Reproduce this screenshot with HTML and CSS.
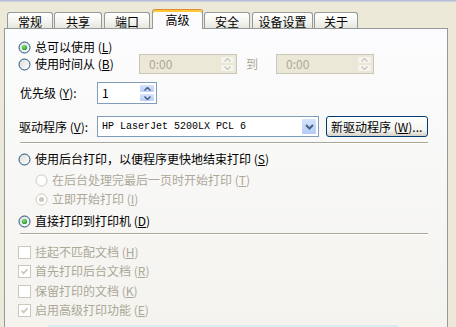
FILE: index.html
```html
<!DOCTYPE html>
<html>
<head>
<meta charset="utf-8">
<link rel="stylesheet" href="styles.css">
</head>
<body>
<div class="window">
  <div class="topline"></div>
  <div class="tabs">
    <div class="tab t1">常规</div>
    <div class="tab t2">共享</div>
    <div class="tab t3">端口</div>
    <div class="tab active">高级</div>
    <div class="tab t5">安全</div>
    <div class="tab t6">设备设置</div>
    <div class="tab t7">关于</div>
  </div>
  <div class="panel">
    <div class="row r1">
      <svg class="radio" width="13" height="13" viewBox="0 0 13 13"><defs><linearGradient id="rg" x1="0" y1="0" x2="1" y2="1"><stop offset="0" stop-color="#DCDCD7"/><stop offset="1" stop-color="#FFFFFF"/></linearGradient><radialGradient id="gd" cx="0.4" cy="0.35" r="0.7"><stop offset="0" stop-color="#7BE27B"/><stop offset="1" stop-color="#1E9A1E"/></radialGradient></defs><circle cx="6.5" cy="6.5" r="5.5" fill="url(#rg)" stroke="#1C5180"/><circle cx="6.5" cy="6.5" r="2.6" fill="url(#gd)"/></svg>
      <span class="label">总可以使用 (<u>L</u>)</span>
    </div>
    <div class="row r2">
      <svg class="radio" width="13" height="13" viewBox="0 0 13 13"><circle cx="6.5" cy="6.5" r="5.5" fill="url(#rg)" stroke="#1C5180"/></svg>
      <span class="label time-label">使用时间从 (<u>B</u>)</span>
      <div class="spin time disabled">
        <span class="val">0:00</span>
        <span class="btns"><span class="sb"><svg width="7" height="4" viewBox="0 0 7 4"><path d="M0.5 3.5 L3.5 0.5 L6.5 3.5" fill="none" stroke="#C9C7BA" stroke-width="1.3"/></svg></span><span class="sb"><svg width="7" height="4" viewBox="0 0 7 4"><path d="M0.5 0.5 L3.5 3.5 L6.5 0.5" fill="none" stroke="#C9C7BA" stroke-width="1.3"/></svg></span></span>
      </div>
      <span class="to">到</span>
      <div class="spin time disabled">
        <span class="val">0:00</span>
        <span class="btns"><span class="sb"><svg width="7" height="4" viewBox="0 0 7 4"><path d="M0.5 3.5 L3.5 0.5 L6.5 3.5" fill="none" stroke="#C9C7BA" stroke-width="1.3"/></svg></span><span class="sb"><svg width="7" height="4" viewBox="0 0 7 4"><path d="M0.5 0.5 L3.5 3.5 L6.5 0.5" fill="none" stroke="#C9C7BA" stroke-width="1.3"/></svg></span></span>
      </div>
    </div>
    <div class="row r3">
      <span class="label field-label">优先级 (<u>Y</u>):</span>
      <div class="spin prio">
        <span class="val">1</span>
        <span class="btns"><span class="sb"><svg width="7" height="4" viewBox="0 0 7 4"><path d="M0.5 3.5 L3.5 0.5 L6.5 3.5" fill="none" stroke="#4D6185" stroke-width="1.5"/></svg></span><span class="sb"><svg width="7" height="4" viewBox="0 0 7 4"><path d="M0.5 0.5 L3.5 3.5 L6.5 0.5" fill="none" stroke="#4D6185" stroke-width="1.5"/></svg></span></span>
      </div>
    </div>
    <div class="row r4">
      <span class="label field-label drv">驱动程序 (<u>V</u>):</span>
      <div class="select">
        <span class="sval">HP LaserJet 5200LX PCL 6</span>
        <span class="dd"><svg width="9" height="6" viewBox="0 0 9 6"><path d="M1 1 L4.5 4.5 L8 1" fill="none" stroke="#4D6185" stroke-width="2"/></svg></span>
      </div>
      <div class="button">新驱动程序 (<u>W</u>)...</div>
    </div>
    <div class="sep s1"></div>
    <div class="row r5">
      <svg class="radio" width="13" height="13" viewBox="0 0 13 13"><circle cx="6.5" cy="6.5" r="5.5" fill="url(#rg)" stroke="#1C5180"/></svg>
      <span class="label">使用后台打印，以便程序更快地结束打印 (<u>S</u>)</span>
    </div>
    <div class="row r6 sub dis">
      <svg class="radio" width="13" height="13" viewBox="0 0 13 13"><circle cx="6.5" cy="6.5" r="5.5" fill="#FFFFFF" stroke="#CAC8BB"/></svg>
      <span class="label">在后台处理完最后一页时开始打印 (<u>T</u>)</span>
    </div>
    <div class="row r7 sub dis">
      <svg class="radio" width="13" height="13" viewBox="0 0 13 13"><circle cx="6.5" cy="6.5" r="5.5" fill="#FFFFFF" stroke="#CAC8BB"/><circle cx="6.5" cy="6.5" r="2.5" fill="#CAC8BB"/></svg>
      <span class="label">立即开始打印 (<u>I</u>)</span>
    </div>
    <div class="row r8">
      <svg class="radio" width="13" height="13" viewBox="0 0 13 13"><circle cx="6.5" cy="6.5" r="5.5" fill="url(#rg)" stroke="#1C5180"/><circle cx="6.5" cy="6.5" r="2.6" fill="url(#gd)"/></svg>
      <span class="label">直接打印到打印机 (<u>D</u>)</span>
    </div>
    <div class="sep s2"></div>
    <div class="row c1 dis">
      <svg class="check" width="13" height="13" viewBox="0 0 13 13"><rect x="0.5" y="0.5" width="12" height="12" fill="#FFFFFF" stroke="#CAC8BB"/></svg>
      <span class="label">挂起不匹配文档 (<u>H</u>)</span>
    </div>
    <div class="row c2 dis">
      <svg class="check" width="13" height="13" viewBox="0 0 13 13"><rect x="0.5" y="0.5" width="12" height="12" fill="#FFFFFF" stroke="#CAC8BB"/><path d="M3.5 6.2 L5.5 8.4 L9.6 4.2" fill="none" stroke="#CAC8BB" stroke-width="1.7"/></svg>
      <span class="label">首先打印后台文档 (<u>R</u>)</span>
    </div>
    <div class="row c3 dis">
      <svg class="check" width="13" height="13" viewBox="0 0 13 13"><rect x="0.5" y="0.5" width="12" height="12" fill="#FFFFFF" stroke="#CAC8BB"/></svg>
      <span class="label">保留打印的文档 (<u>K</u>)</span>
    </div>
    <div class="row c4 dis">
      <svg class="check" width="13" height="13" viewBox="0 0 13 13"><rect x="0.5" y="0.5" width="12" height="12" fill="#FFFFFF" stroke="#CAC8BB"/><path d="M3.5 6.2 L5.5 8.4 L9.6 4.2" fill="none" stroke="#CAC8BB" stroke-width="1.7"/></svg>
      <span class="label">启用高级打印功能 (<u>E</u>)</span>
    </div>
    <div class="bottomhint"></div>
  </div>
</div>
</body>
</html>
```
FILE: styles.css
```css
html, body {
  margin: 0;
  padding: 0;
}
body {
  background: #ECE9D8;
  font-family: "Noto Sans CJK SC", "Liberation Sans", sans-serif;
  font-size: 12px;
  line-height: 14px;
  color: #000;
  overflow: hidden;
  width: 456px;
  height: 327px;
}
.window {
  display: flex;
  flex-direction: column;
  height: 327px;
}
.topline {
  height: 2px;
  background: linear-gradient(#AEB8D6, #D4D8E4);
}
.tabs {
  display: flex;
  align-items: flex-end;
  height: 19px;
  margin-top: 7px;
  padding-left: 7px;
  gap: 1px;
}
.tab {
  height: 16px;
  box-sizing: border-box;
  border: 1px solid #919B9C;
  border-bottom: none;
  border-radius: 3px 3px 0 0;
  background: linear-gradient(#FFFFFF, #F3F3EF 60%, #E6E5DE);
  display: flex;
  align-items: center;
  justify-content: center;
  padding-top: 2px;
  width: 46px;
}
.t2 { width: 48px; }
.t3 { width: 46px; margin-left: 1px; }
.t5 { width: 46px; }
.t6 { width: 61px; margin-left: 1px; }
.t7 { width: 44px; }
.tab.active {
  height: 20px;
  width: 51px;
  margin: 0 0 -1px 1px;
  background: #FCFCFE;
  border-top: 1px solid #E68B2C;
  box-shadow: inset 0 2px 0 #FFC83C;
  padding-top: 0;
  align-items: flex-start;
  padding-top: 3px;
  z-index: 1;
  position: relative;
}
.panel {
  flex: 1;
  margin: 0 8px 0 4px;
  border: 1px solid #919B9C;
  border-bottom: none;
  background: linear-gradient(#FCFCFE, #F4F3EE);
  display: flex;
  flex-direction: column;
  padding: 11px 0 0 13px;
}
.row {
  display: flex;
  align-items: center;
  height: 16px;
  white-space: nowrap;
}
.radio, .check {
  flex: none;
  margin-right: 4px;
}
.label u {
  text-decoration: underline;
  text-underline-offset: 1px;
}
.r1 { height: 14px; }
.r2 { height: 20px; margin-top: 0; }
.time-label { width: 104px; }
.spin {
  box-sizing: border-box;
  height: 20px;
  border: 1px solid #7F9DB9;
  background: #FFFFFF;
  display: flex;
  align-items: center;
  padding: 1px;
}
.spin .val {
  flex: 1;
  padding-left: 3px;
}
.spin.disabled {
  border-color: #C9C7BA;
  background: #EBE8D7;
  color: #ACA899;
}
.spin.disabled .val { padding-left: 8px; }
.time { width: 98px; }
.btns {
  display: flex;
  flex-direction: column;
  height: 100%;
  width: 15px;
  gap: 0;
}
.sb {
  flex: 1;
  display: flex;
  align-items: center;
  justify-content: center;
  background: linear-gradient(#D6E4FC, #B8CDF7);
  border: 1px solid #FFFFFF;
  border-radius: 2px;
}
.disabled .sb {
  background: #F4F3EE;
  border-color: #EBE8D7;
}
.to {
  color: #ACA899;
  margin: 0 18px 0 9px;
}
.r3 { height: 22px; margin-top: 8px; }
.field-label { width: 77px; padding-left: 2px; }
.drv { padding-left: 1px; width: 78px; }
.prio { width: 60px; height: 22px; }
.prio .btns { width: 16px; }
.r4 { height: 21px; margin-top: 12px; }
.select {
  box-sizing: border-box;
  width: 222px;
  height: 21px;
  border: 1px solid #7F9DB9;
  background: #FFFFFF;
  display: flex;
  align-items: center;
  padding: 1px;
}
.sval {
  flex: 1;
  font-family: "Liberation Mono", monospace;
  font-size: 10px;
  padding-left: 3px;
}
.dd {
  width: 16px;
  height: 17px;
  display: flex;
  align-items: center;
  justify-content: center;
  background: linear-gradient(#D6E4FC, #B3CAF7);
  border: 1px solid #FFFFFF;
  border-radius: 2px;
  box-sizing: border-box;
}
.button {
  margin-left: 7px;
  box-sizing: border-box;
  width: 102px;
  height: 21px;
  border: 1px solid #003C74;
  border-radius: 3px;
  background: linear-gradient(#FFFFFF, #F4F4F0 70%, #D6D0C5);
  display: flex;
  align-items: center;
  padding-left: 4px;
}
.sep {
  height: 1px;
  background: #A8A797;
  border-bottom: 1px solid #FFFFFF;
  width: 408px;
  margin-left: 2px;
}
.s1 { margin-top: 5px; }
.r5 { margin-top: 7px; }
.sub { padding-left: 17px; }
.r6 { margin-top: 5px; }
.r7 { margin-top: 3px; }
.r8 { margin-top: 6px; }
.s2 { margin-top: 4px; }
.c1 { margin-top: 9px; }
.c2 { margin-top: 3px; }
.c3 { margin-top: 4px; }
.c4 { margin-top: 3px; }
.dis { color: #ACA899; }
.bottomhint {
  margin-top: auto;
  margin-left: 30px;
  width: 350px;
  height: 2px;
  background: #DDEBF3;
}
```
